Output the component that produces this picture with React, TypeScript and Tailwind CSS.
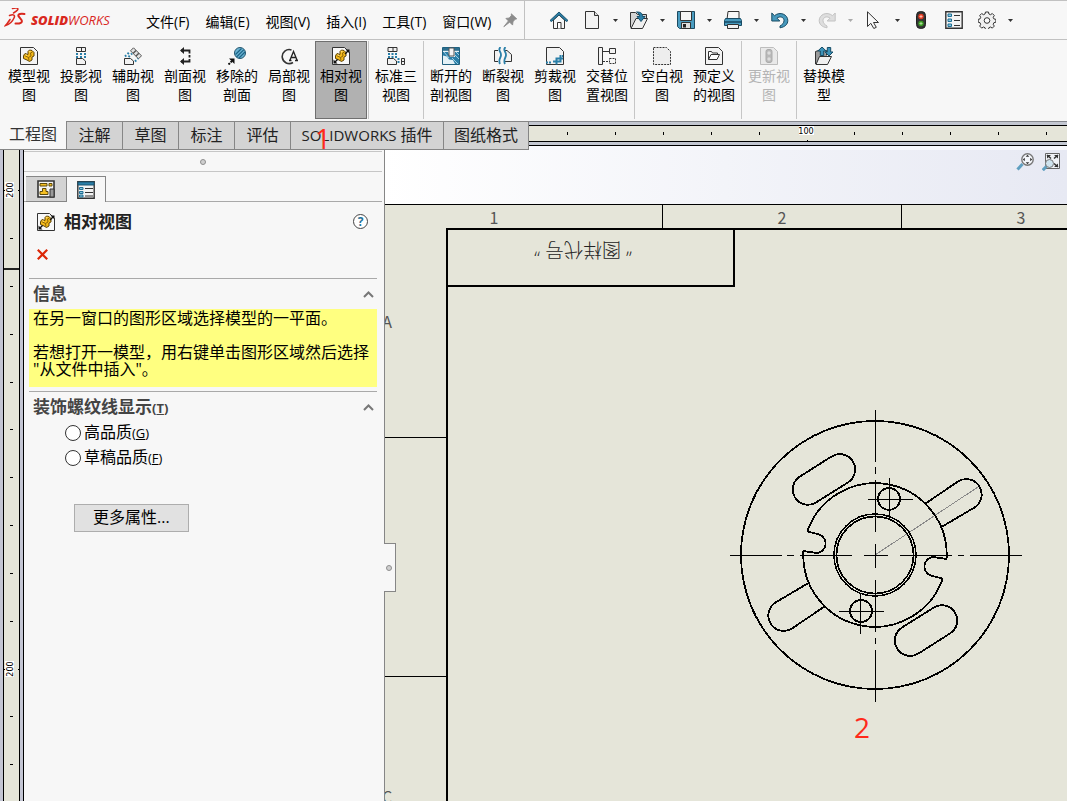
import { Fragment, useState, type ReactNode } from "react";

const INK = "#333333";
const BLUE = "#2a7fa8";

function Svg({ children, size = 18 }: { children: ReactNode; size?: number }) {
  return (
    <svg width={size} height={size} viewBox="0 0 18 18" fill="none" stroke={INK} strokeWidth="1" aria-hidden="true" className="shrink-0">
      {children}
    </svg>
  );
}

function PartShape() {
  return (
    <>
      <path d="M3.500 8.500 5 6.500l3 1V4.500L9.500 3 12 3.500l2 2v3.500l-2 1v3L9.500 14.500l-2.500-1.500-3.500-1.500z" fill="#f4b919" stroke="#5c4306" />
      <path d="M4.500 8.500 8.500 10.500l.5 3M8.500 10.500 11 9l-.5-3L12.500 5" stroke="#8a6508" />
      <path d="M9 5l1.500-.7M5.500 8l1.500.3" stroke="#ffe88c" />
    </>
  );
}

function SheetShape({ muted = false }: { muted?: boolean }) {
  return <path d="M.5.5h13l4 4v13H.5z" fill={muted ? "#e9e9e9" : "#f3f3f3"} stroke={muted ? "#bdbdbd" : INK} />;
}

function RelativeViewIcon() {
  return (
    <Svg>
      <path d="M.5.5h12L17.500 5.500v12H.5z" fill="#f8f8f8" />
      <PartShape />
      <path d="m2.500 15.500 3-3M13 7l3-3" stroke="#111" strokeWidth="1.400" />
      <path d="M1.500 16.500V12.500L5.500 16.500zM17.500 2.500V6.500L13.500 2.500z" fill="#111" stroke="none" />
    </Svg>
  );
}

const ribbonIcons: Record<string, ReactNode> = {
  model: (
    <Svg>
      <SheetShape />
      <PartShape />
    </Svg>
  ),
  projected: (
    <Svg>
      <path d="M4.500.5h9v4h-9zM9.500.5v4M4.500 11.500h6l3 2.500v3.500h-9z" fill="#f2f2f2" />
      <path d="M5 6v5M9 6v5M13 6v5" stroke={BLUE} strokeWidth="2" strokeDasharray="2 1" />
    </Svg>
  ),
  auxiliary: (
    <Svg>
      <path d="M.5 11.500h6l3 2.500v3.500h-9z" fill="#f2f2f2" />
      <path d="m9.500.8 8 8-3 3-8-8z" fill="#e2e2e2" stroke="#555" />
      <path d="m12 3.500-3 3M14.800 6.200l-3 3" stroke="#555" strokeWidth="1.400" />
      <path d="M1 9.500 5 5.500M4.500 10 8 6.500M11 14.500l3-3" stroke={BLUE} strokeWidth="2" strokeDasharray="1.800 1.800" />
    </Svg>
  ),
  section: (
    <Svg>
      <path d="M5 3.500h8.500v3M13.500 8v2.500M13.500 12v2.500H5" stroke="#222" strokeWidth="1.800" />
      <path d="M4 3.500 8 0v7zM4 14.500 8 11v7z" fill="#222" stroke="none" />
    </Svg>
  ),
  removed: (
    <Svg>
      <circle cx="12" cy="6" r="5.500" fill="#6bb4d3" stroke="#25566e" />
      <path d="m7.500 7.500 6-6M8.500 10l7.200-7.200M11 11l6-6" stroke="#1c6386" strokeWidth="1.200" />
      <path d="M.5 17.500 4 14" stroke="#111" strokeWidth="2" strokeDasharray="2 1" />
      <path d="M6.500 11.500v5.500l-5.500-5.500z" fill="#111" stroke="none" />
    </Svg>
  ),
  detail: (
    <Svg>
      <path d="M11.500 3A7 7 0 1 0 13 15.500" strokeWidth="1.600" />
      <path d="m10 13 3.500-8.500L17 13M11.500 10.500h4M9 13.500h2.500M15 13.500h3" stroke="#222" strokeWidth="1.300" />
    </Svg>
  ),
  relative: <RelativeViewIcon />,
  standard3: (
    <Svg>
      <path d="M1 .5h9v4H1zM6 .5v4M.5 11.500h6l3 2.500v3.500h-9zM14.500 11.500h3v6h-3zM14.500 14.500h3" fill="#f2f2f2" />
      <path d="M2 6v5M5.500 6v5M9 6v5M11.500 11v6" stroke={BLUE} strokeWidth="2" strokeDasharray="2 1" />
    </Svg>
  ),
  brokenOut: (
    <Svg>
      <path d="M.5.5h17v17H.5z" fill="#e4f1f6" stroke="#1f5f7d" />
      <path d="M1 5v3.500l4 1 2 3 4 .5 2 4h4V5h-4v5H8L6 5z" fill={BLUE} stroke="none" />
      <path d="m2 5 5 6M13 8l4 4M10 11l6 6M14 5l3 3" stroke="#9fcde0" />
      <path d="M.8.8h16.400v3H.8z" fill="#2d6f8f" stroke="none" />
      <path d="M7 1h5v8H7z" fill="#f4f4f4" stroke="#555" />
    </Svg>
  ),
  breakView: (
    <Svg>
      <path d="M4 3.500H.5v11H4M11 3.500h2l4.500 4v7H11" fill="#f2f2f2" />
      <path d="M6.500 0c-4 4 2.500 5 0 10-1 2-2 4-.5 7M11.500 0c-4 4 2.500 5 0 10-1 2-2 4-.5 7" stroke={BLUE} strokeWidth="1.800" />
    </Svg>
  ),
  crop: (
    <Svg>
      <SheetShape />
      <path d="M0 15.500h6M17 9h-1" stroke={BLUE} strokeWidth="2" strokeDasharray="2 1" />
      <path d="M10.500 17.500v-6H17M14.500 8v6.500H7" stroke={BLUE} strokeWidth="2" />
    </Svg>
  ),
  alternate: (
    <Svg>
      <path d="M.5.5h4v17h-4zM11.500 1.500h6v5h-6zM4.500 4.500h7" fill="#f2f2f2" />
      <path d="M11.500 11.500h6v5h-6zM5 14.500h6" strokeDasharray="2 1" />
    </Svg>
  ),
  empty: (
    <Svg>
      <path d="M.5.5h13l4 4v13H.5z" fill="#eeeeee" strokeDasharray="2 1" />
    </Svg>
  ),
  predefined: (
    <Svg>
      <SheetShape />
      <path d="M3.500 12.500v-8h3l1 1.500h5v2M3.500 12.500l2.500-5h8.500l-2.500 5z" fill="#fff" />
    </Svg>
  ),
  update: (
    <Svg>
      <SheetShape muted />
      <rect x="6" y="2.500" width="6" height="13" rx="2" fill="#b9b9b9" stroke="#ababab" />
      <circle cx="9" cy="6" r="1.700" fill="#dddddd" stroke="none" />
      <circle cx="9" cy="12" r="1.700" fill="#dddddd" stroke="none" />
    </Svg>
  ),
  replace: (
    <Svg>
      <path d="M.5 17V4.500l3-1h8v5" fill="#9a9a9a" />
      <path d="M1 17.500 4.500 9.500h12L12.500 17.500z" fill="#f0f0f0" />
      <path d="M7 0 2.800 4h2.500v4.500h3.400V4h2.500zM12.300.5v4.500H10l4 4 4-4h-2.300V.5z" fill="#3c92b8" stroke="#164c66" />
    </Svg>
  ),
};

type RibbonItem = { icon: string; label: string; disabled?: boolean };

const ribbonGroups: RibbonItem[][] = [
  [
    { icon: "model", label: "模型视图" },
    { icon: "projected", label: "投影视图" },
    { icon: "auxiliary", label: "辅助视图" },
    { icon: "section", label: "剖面视图" },
    { icon: "removed", label: "移除的剖面" },
    { icon: "detail", label: "局部视图" },
    { icon: "relative", label: "相对视图" },
  ],
  [{ icon: "standard3", label: "标准三视图" }],
  [
    { icon: "brokenOut", label: "断开的剖视图" },
    { icon: "breakView", label: "断裂视图" },
    { icon: "crop", label: "剪裁视图" },
    { icon: "alternate", label: "交替位置视图" },
  ],
  [
    { icon: "empty", label: "空白视图" },
    { icon: "predefined", label: "预定义的视图" },
  ],
  [{ icon: "update", label: "更新视图", disabled: true }],
  [{ icon: "replace", label: "替换模型" }],
];

const menus = ["文件(F)", "编辑(E)", "视图(V)", "插入(I)", "工具(T)", "窗口(W)"];

const fileTools: { label: string; icon: ReactNode; disabled?: boolean }[] = [
  {
    label: "新建",
    icon: (
      <Svg>
        <path d="M2.500.5h9l4 4v13h-13z" fill="#f3f3f3" />
        <path d="M11.500.5v4h4" fill="#ddd" />
      </Svg>
    ),
  },
  {
    label: "打开",
    icon: (
      <Svg>
        <path d="M.5 16.500v-15h5l2 2h9v4" fill="#d5d5d5" />
        <path d="m1 17.500 5-10h11.500l-5 10z" fill="#f0f0f0" />
        <path d="M6.500 1c4 0 6 1 6 4.500H15l-4 5-4-5h2.500c0-2-.7-3-3-4.500z" fill={BLUE} stroke="#174f6b" />
      </Svg>
    ),
  },
  {
    label: "保存",
    icon: (
      <Svg>
        <path d="M.5.5h17v17h-15l-2-2z" fill="#4a9cc0" stroke="#1d4a60" />
        <path d="M3.500.5h11v9h-11z" fill="#f5f5f5" />
        <path d="M4.500 11.500h9v6h-9z" fill="#e0e0e0" />
        <path d="M6 13h3v3.500H6z" fill="#222" stroke="none" />
      </Svg>
    ),
  },
  {
    label: "打印",
    icon: (
      <Svg>
        <path d="M4 .5h11v8H3z" fill="#f7f7f7" />
        <path d="M1.500 7.500h15l1 2v5H.5v-5z" fill="#4799bd" stroke="#174a63" />
        <path d="M1 11h16" stroke="#174a63" strokeWidth="1.500" />
        <path d="M3.500 13.500h11v4h-11z" fill="#f0f0f0" />
      </Svg>
    ),
  },
  {
    label: "撤销",
    icon: (
      <Svg>
        <path d="M.8 2v8h8L6 7.200c3-2.500 7-1 7 2.300 0 2.500-1.500 4-4 5.500v1.800c5-.8 7.800-3.500 7.800-7.300C16.800 3.500 9 0 3.500 4.700z" fill="#4799bd" stroke="#174a63" />
      </Svg>
    ),
  },
  {
    label: "重做",
    disabled: true,
    icon: (
      <Svg>
        <path d="M17.200 2v8h-8L12 7.200c-3-2.500-7-1-7 2.300 0 2.500 1.500 4 4 5.500v1.800C4 16 1.200 13.300 1.200 9.500 1.200 3.500 9 0 14.500 4.700z" fill="#dedede" stroke="#c2c2c2" />
      </Svg>
    ),
  },
  {
    label: "选择",
    icon: (
      <Svg>
        <path d="M2.500.8v14.700l3.300-3.200 3 5.200 2.500-1.200L8.500 11.500h5z" fill="#f8f8f8" />
      </Svg>
    ),
  },
];

const tabs = ["工程图", "注解", "草图", "标注", "评估", "SOLIDWORKS 插件", "图纸格式"];

function ListIcon() {
  return (
    <Svg>
      <path d="M.8.8h16.400v16.400H.8z" fill="#f3f3f3" strokeWidth="1.400" />
      <path d="M3 3h3.500v2.500H3zM3 8h3.500v2.500H3zM3 13h3.500v2.500H3z" fill="#8cc8e0" stroke="#1f6f94" />
      <path d="M9 4.500h6M9 9.500h6M9 14.500h6" />
    </Svg>
  );
}

function Caret({ muted = false }: { muted?: boolean }) {
  return (
    <svg width="5" height="3" viewBox="0 0 5 3" aria-hidden="true">
      <path d="M0 0h5L2.500 3z" fill={muted ? "#aaaaaa" : "#333333"} />
    </svg>
  );
}

function Header() {
  return (
    <header className="flex h-10 shrink-0 items-stretch border-y border-[#c1c1c1] bg-[#f7f7f7]">
      <div className="flex w-[524px] shrink-0 items-center">
        <div className="flex w-[138px] items-center pl-1 text-[#d9281e]">
          <svg width="23" height="24" viewBox="4 8 23 24" fill="none" stroke="currentColor" strokeWidth="1.500" strokeLinecap="round" aria-hidden="true">
            <path d="M12.500 8.500C16 7.500 19 8 17.500 10c-1 1.300-2.500 2.200-4 3" />
            <path d="M9.500 15.500c4-1.500 6-.5 4.500 2.500-1.500 3.500-5 6.500-8.500 7.500 1.500-2 3-3.500 4.500-6" />
            <path d="M24.500 14c-3.500-.8-7 0-6 2.200l3 3.800c1.500 2.500-1.500 4-6 3.500" strokeWidth="2" />
          </svg>
          <span className="ml-1 text-[13px] leading-5 italic">
            <b className="font-extrabold">SOLID</b>WORKS
          </span>
        </div>
        <nav className="flex items-center pt-[3px] text-sm whitespace-nowrap">
          {menus.map((menu) => (
            <button key={menu} className="px-2">
              {menu}
            </button>
          ))}
        </nav>
        <button aria-label="固定菜单" className="ml-1">
          <Svg size={15}>
            <path d="m10 1 6.500 6-2 .5-2.500 3-.5 4-3.500-3.500L1 16.500 6.500 9.500 3.500 6.500l4-.5 2.500-3z" fill="#8c8c8c" stroke="#8c8c8c" />
          </Svg>
        </button>
      </div>
      <div className="flex flex-1 items-center border-l border-[#c1c1c1] pl-6">
        <button aria-label="主页" className="mr-[13px] flex w-5 justify-center">
          <Svg>
            <path d="M3.500 9v8.500h11V9L9 4z" fill="#f6f6f6" />
            <path d="M7.500 17.500v-6h3.500v6" fill="#fff" />
            <path d="M0 9.500 9 1l9 8.500-1.500 1L9 3.800 1.500 10.500z" fill={BLUE} stroke="#1c5570" />
          </Svg>
        </button>
        {fileTools.map((tool) => (
          <Fragment key={tool.label}>
            <button aria-label={tool.label} disabled={tool.disabled} className="flex w-5 justify-center">
              {tool.icon}
            </button>
            <button aria-label={`${tool.label}选项`} disabled={tool.disabled} className="flex h-5 w-[27px] items-center justify-center">
              <Caret muted={tool.disabled} />
            </button>
          </Fragment>
        ))}
        <button aria-label="重建模型" className="flex w-5 justify-center">
          <Svg>
            <rect x="4.500" y=".5" width="9" height="17" rx="4" fill="#343434" stroke="#222" />
            <circle cx="9" cy="5.500" r="2.700" fill="#e23b22" stroke="none" />
            <circle cx="9" cy="12.500" r="2.700" fill="#3b9a24" stroke="none" />
            <path d="M9 4v3M7.500 5.500h3" stroke="#ffb9a8" />
            <path d="M9 11v3M7.500 12.500h3" stroke="#a5e08f" />
          </Svg>
        </button>
        <button aria-label="文件属性" className="ml-[13px] flex w-5 justify-center">
          <ListIcon />
        </button>
        <button aria-label="选项" className="ml-[13px] flex w-5 justify-center">
          <Svg>
            <path
              d="M7.500 1h3l.4 2 1.600.7 1.800-1.200 2 2-1.100 1.800.7 1.600 2 .5v2.800l-2 .5-.7 1.600 1.100 1.800-2 2-1.800-1.100-1.600.7-.4 1.800h-3l-.5-1.800-1.600-.7-1.700 1.100-2-2 1-1.800-.7-1.600-1.800-.5V8.400l1.800-.5.7-1.600-1-1.800 2-2 1.700 1.200L7 3z"
              fill="#f0f0f0"
            />
            <circle cx="9" cy="9.500" r="2.800" fill="#fafafa" />
          </Svg>
        </button>
        <button aria-label="更多选项" className="flex h-5 w-[27px] items-center justify-center">
          <Caret />
        </button>
      </div>
    </header>
  );
}

function Ribbon() {
  return (
    <div className="flex h-[81px] shrink-0 bg-[#f7f7f7] pt-px pb-0.5 pl-[3px]">
      {ribbonGroups.map((group, i) => (
        <Fragment key={i}>
          {i > 0 ? <div className="mx-px w-px shrink-0 bg-[#c6c6c6]" /> : null}
          {group.map((item) => (
            <button
              key={item.icon}
              disabled={item.disabled}
              className={`flex w-[52px] shrink-0 flex-col items-center border px-1 pt-[5px] text-sm leading-[19px] ${
                item.icon === "relative" ? "border-[#6f6f6f] bg-[#b1b1b1]" : "border-transparent"
              } ${item.disabled ? "text-[#b4b4b4]" : "text-black"}`}
            >
              {ribbonIcons[item.icon]}
              <span className="mt-px">{item.label}</span>
            </button>
          ))}
        </Fragment>
      ))}
    </div>
  );
}

const horizontalTicks = [38, 86, 134, 182, 230, 325, 373, 421, 469, 517, 565, 613, 661, 709];
const verticalTicks = [88, 136, 184, 232, 279, 327, 375, 423, 471, 566, 614, 662, 710, 758, 806];

function TabRow() {
  const [active, setActive] = useState("工程图");
  return (
    <div className="flex h-[29px] shrink-0">
      <div role="tablist" className="relative flex shrink-0 border-r border-b border-[#868686]">
        {tabs.map((tab) => (
          <button
            key={tab}
            role="tab"
            aria-selected={tab === active}
            onClick={() => setActive(tab)}
            className={`flex items-center px-[10px] pb-0.5 text-base leading-5 whitespace-nowrap first:px-[9px] ${
              tab === active ? "bg-[#f7f7f7] text-[#333]" : "border-t border-l border-[#868686] bg-[#d3d3d3] text-[#222]"
            } ${tab.length === 2 ? "w-14 justify-center" : ""} ${tab.startsWith("SOLIDWORKS") ? "w-[153px] justify-center" : ""}`}
          >
            {tab.startsWith("SOLIDWORKS") ? (
              <>
                <span className="text-[15px]">SOLIDWORKS&nbsp;</span>插件
              </>
            ) : (
              tab
            )}
          </button>
        ))}
        <span className="pointer-events-none absolute top-[3px] left-[315px] text-[28px] leading-7 text-[#ff2a1c]">1</span>
      </div>
      <svg className="h-full min-w-0 flex-1" aria-label="水平标尺">
        <rect width="100%" height="29" fill="#c3c7d1" />
        <path d="M0 .5H3000" stroke="#85878d" />
        <rect y="4" width="3000" height="17" fill="#e5e5d9" />
        <path d="M0 4.500H3000M0 20.500H3000M0 24.500H3000" stroke="#000" />
        <rect y="25" width="3000" height="4" fill="#f8f9fd" />
        <path d="M278.500 4v2M278.500 19v2" stroke="#000" />
        {horizontalTicks.map((x) => (
          <rect key={x} x={x} y="11" width="1" height="3" fill="#000" />
        ))}
        <rect x="270" y="5" width="15" height="9" fill="#fff" />
        <text x="277" y="13" textAnchor="middle" fontSize="9" fill="#000" fontFamily="'DejaVu Sans Condensed', 'DejaVu Sans', sans-serif">
          100
        </text>
      </svg>
    </div>
  );
}

function VerticalRuler() {
  return (
    <svg className="h-full w-6 shrink-0" aria-label="垂直标尺">
      <rect width="24" height="100%" fill="#c3c5d3" />
      <rect x="3" width="17" height="100%" fill="#e5e5d9" />
      <path d="M3.500 0V3000M19.500 0V3000M23.500 0V3000" stroke="#000" />
      <path d="M4 119h15" stroke="#222" strokeWidth="2" />
      {verticalTicks.map((y) => (
        <rect key={y} x="10" y={y} width="3" height="1" fill="#000" />
      ))}
      {[40, 519].map((y) => (
        <g key={y}>
          <path d={`M4 ${y + 0.5}h1M18 ${y + 0.5}h1`} stroke="#000" />
          <rect x="5" y={y - 8} width="9" height="16" fill="#fff" />
          <text transform={`translate(13 ${y}) rotate(-90)`} textAnchor="middle" fontSize="9" fontFamily="'DejaVu Sans Condensed', 'DejaVu Sans', sans-serif">
            200
          </text>
        </g>
      ))}
    </svg>
  );
}

function SectionHead({ children }: { children: ReactNode }) {
  return (
    <button className="flex w-full items-center justify-between border-t border-[#a9a9a9] pr-[3px] pl-1 text-[17px] leading-[30px] font-bold text-[#444]">
      <span>{children}</span>
      <svg width="11" height="7" viewBox="0 0 11 7" fill="none" stroke="#777" strokeWidth="2" aria-hidden="true">
        <path d="m1 6 4.500-4.500L10 6" />
      </svg>
    </button>
  );
}

function PropertyPanel() {
  const [quality, setQuality] = useState("");
  return (
    <aside className="relative w-[361px] shrink-0 border-r border-[#868686] bg-[#f7f7f7]">
      <div className="mt-px mr-0.5 flex h-[21px] items-center justify-center border-y border-[#c6c6c6]">
        <span className="size-1.5 rounded-full border border-[#8e8e8e] bg-[#cfcfcf]" />
      </div>
      <div className="mt-1 mr-0.5 flex h-[26px] pl-0.5 shadow-[inset_0_-1px_#a9a9a9]">
        <button aria-label="特征树" className="flex w-10 items-center justify-center border-t border-b border-[#868686] bg-[#d3d3d3]">
          <Svg>
            <path d="M1 1h16v16H1z" fill="#f4f4f4" strokeWidth="1.600" />
            <path d="M3 3.500h7v2.500H3zM12 3.500h3v2.500h-3zM3 14.500v-3h2.500v-3H9v3h2v3z" fill="#f5c023" stroke="#5d4a0c" />
            <path d="M13 9h4v8h-4z" fill="#999" />
          </Svg>
        </button>
        <button aria-label="属性" className="flex w-10 items-center justify-center border-x border-t border-[#868686] bg-[#f7f7f7]">
          <Svg>
            <path d="M.8.8h16.400v16.400H.8z" fill="#f3f3f3" strokeWidth="1.400" />
            <path d="M1 1h16v3H1z" fill={BLUE} stroke="#1c5570" />
            <path d="M2.500 6.500H6v2H2.500zM2.500 10.500H6v2H2.500zM2.500 14H6v2H2.500z" fill="#8cc8e0" stroke="#1f6f94" />
            <path d="M8 7.500h8M8 11.500h8M8 15h8" />
          </Svg>
        </button>
      </div>
      <div className="flex h-[39px] items-center pr-4 pl-[13px]">
        <RelativeViewIcon />
        <h2 className="ml-[9px] flex-1 text-[17px] font-bold text-[#222]">相对视图</h2>
        <button aria-label="帮助" className="flex size-[15px] items-center justify-center rounded-full border border-[#444] bg-white text-xs font-bold text-[#1f7299]">
          ?
        </button>
      </div>
      <button aria-label="取消" className="mt-2 ml-[13px] block">
        <svg width="11" height="11" viewBox="0 0 11 11" stroke="#dc2606" strokeWidth="2.200" aria-hidden="true">
          <path d="m.8.8 9.400 9.400M10.200.8.8 10.200" />
        </svg>
      </button>
      <section className="mt-[18px] mr-[7px] ml-[5px]">
        <SectionHead>信息</SectionHead>
        <div className="bg-[#ffff80] px-1 pt-px pb-[9px] text-base leading-[17px]">
          <p>在另一窗口的图形区域选择模型的一平面。</p>
          <p className="mt-[17px]">
            若想打开一模型，用右键单击图形区域然后选择
            <br />
            &quot;从文件中插入&quot;。
          </p>
        </div>
      </section>
      <section className="mt-1 mr-[7px] ml-[5px]">
        <SectionHead>
          装饰螺纹线显示
          <span className="text-[13px]">
            (<u>T</u>)
          </span>
        </SectionHead>
        <div className="flex flex-col pl-9">
          {[
            ["高品质", "G"],
            ["草稿品质", "F"],
          ].map(([name, key]) => (
            <label key={key} className="flex h-[25px] items-center gap-[3px] pb-1.5 text-base leading-5">
              <input
                type="radio"
                name="quality"
                checked={quality === key}
                onChange={() => setQuality(key)}
                className="size-4 appearance-none rounded-full border border-[#333] bg-white checked:border-4"
              />
              <span>
                {name}
                <span className="text-[13px]">
                  (<u>{key}</u>)
                </span>
              </span>
            </label>
          ))}
        </div>
      </section>
      <button className="mt-[31px] ml-[50px] h-7 border border-[#adadad] bg-[#e1e1e1] px-[18px] pb-0.5 text-base leading-5">更多属性...</button>
      <button aria-label="折叠面板" className="absolute top-[393px] left-[360px] z-10 flex h-[49px] w-3 items-center border-y border-r border-[#868686] bg-[#f7f7f7]">
        <span className="ml-0.5 size-1.5 rounded-full border border-[#8e8e8e] bg-[#cfcfcf]" />
      </button>
    </aside>
  );
}

// One half of the flange; the other half is the same shape turned by 180 degrees.
function FlangeHalf() {
  return (
    <>
      <path d="M-67.700-23.700A71.700 71.700 0 0 1 71.600 4L58 2A9.500 9.500 0 0 0 56 20.500L67.700 23.700" />
      <path d="M-43.500-98.500-75-78.500A15 15 0 0 0-59-52.500L-27-72.500A15 15 0 0 0-43.500-98.500Z" />
      <path d="M50.500-51.500 83-73.500A15.300 15.300 0 0 1 99.500-47.500L66.500-28" />
      <circle cx="14" cy="-56" r="11" />
    </>
  );
}

const axisDashes = "M-146 0H-94M-89 0H-82M-76 0H-24M-12 0H12M24 0H76M82 0H88M94 0H146";

function DrawingSheet() {
  return (
    <main className="relative min-w-0 flex-1 overflow-hidden bg-linear-to-r from-white to-[#e7e9f3]">
      <svg className="absolute inset-0 h-full w-full" aria-label="工程图图纸">
        <rect y="54" width="3000" height="3000" fill="#e5e5d9" />
        <g stroke="#000" shapeRendering="crispEdges" fill="none">
          <path d="M0 54.500H3000M277.500 54V79M516.500 54V79M0 287.500H62M0 526.500H62" />
          <path d="M3000 79H62V3000M349 79V136H62" strokeWidth="2" />
        </g>
        <g fontSize="16" fill="#555" textAnchor="middle" fontFamily="'Liberation Sans Narrow', 'Noto Sans CJK SC', sans-serif">
          <text x="109" y="74">1</text>
          <text x="397" y="74">2</text>
          <text x="636" y="74">3</text>
          <text x="2" y="178">A</text>
          <text x="2" y="653">C</text>
        </g>
        <text transform="translate(198 93) rotate(180)" textAnchor="middle" fontSize="19" fontWeight="300" fill="#222" fontFamily="'Open Sans', 'Noto Sans CJK SC', sans-serif">
          “ 图样代号 ”
        </text>
        <g transform="translate(490 405)" fill="none" stroke="#000" shapeRendering="crispEdges">
          <path d="M0 0 103-68" stroke="#888" />
          <g strokeWidth="1.800">
            <circle r="134" />
            <circle r="41" strokeWidth="1.600" />
            <circle r="38.500" strokeWidth="1.600" />
            <FlangeHalf />
            <g transform="rotate(180)">
              <FlangeHalf />
            </g>
          </g>
          <g transform="translate(.5 .5)">
            <path d={axisDashes} />
            <path d={axisDashes} transform="rotate(90)" />
            <path d="M-8-56H37M14-78V-38M-37 56H8M-15 38V78" />
          </g>
        </g>
        <text x="477" y="588" textAnchor="middle" fontSize="28" fill="#ff2a1c">
          2
        </text>
      </svg>
      <div className="relative flex justify-end gap-2 pt-[3px] pr-[7px]">
        <button aria-label="整屏显示全图">
          <Svg>
            <path d="m1.500 16.500 5-5.500" stroke="#5f9fc0" strokeWidth="3" />
            <circle cx="11.500" cy="6.500" r="5.700" fill="#f4f6fa" stroke="#777" strokeWidth="1.400" />
            <path d="m11.500 1.800 1.800 2h-3.600zM11.500 11.200l1.800-2h-3.600zM6.800 6.500l2-1.800v3.600zM16.200 6.500l-2-1.800v3.600z" fill="#333" stroke="none" />
          </Svg>
        </button>
        <button aria-label="局部放大">
          <Svg>
            <path d="M3.500.5h14v15h-14z" fill="#f0f2f6" stroke="#666" />
            <path d="m5 2 4 3.500M16 2l-4 3.500M16 14l-4-3.500" strokeWidth="1.500" />
            <path d="M5 2h4L5 5.500zM16 2h-4l4 3.500zM16 14h-4l4-3.500z" fill="#333" stroke="none" />
            <path d="m.8 17.200 4-4.200" stroke="#5f9fc0" strokeWidth="3" />
            <circle cx="7.500" cy="10.500" r="4" fill="#cfe3ee" stroke="#777" />
          </Svg>
        </button>
      </div>
    </main>
  );
}

export default function App() {
  return (
    <div className="flex h-screen flex-col overflow-hidden bg-[#f7f7f7] font-['Open_Sans','Noto_Sans_CJK_SC',sans-serif] text-black">
      <Header />
      <Ribbon />
      <TabRow />
      <div className="flex min-h-0 flex-1">
        <VerticalRuler />
        <PropertyPanel />
        <DrawingSheet />
      </div>
    </div>
  );
}
